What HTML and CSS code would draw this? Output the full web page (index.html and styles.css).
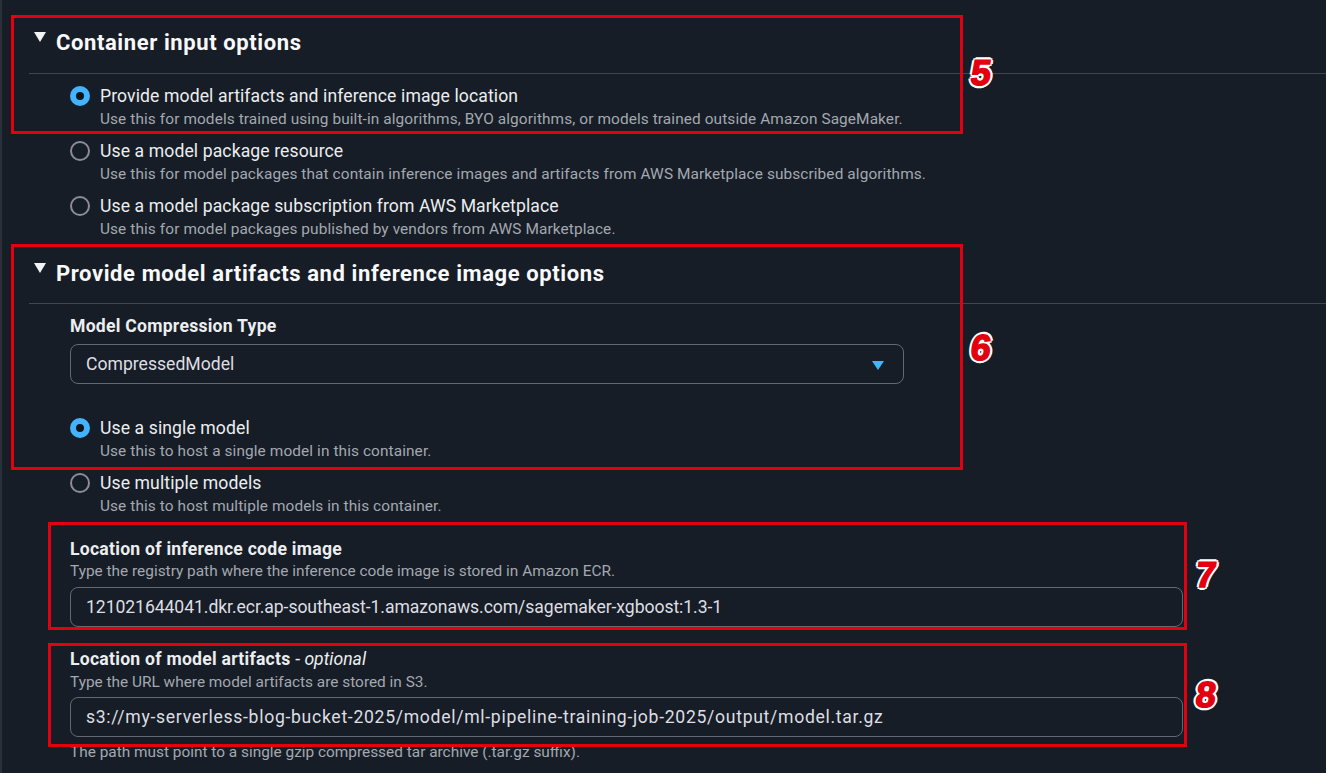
FILE: index.html
```html
<!DOCTYPE html>
<html lang="en">
<head>
<meta charset="utf-8">
<title>Container input options</title>
<link rel="stylesheet" href="styles.css">
</head>
<body>
<div class="page">
  <section class="section">
    <div class="section-header first">
      <span class="caret"></span>
      <h2 class="heading">Container input options</h2>
    </div>
    <div class="section-body first-body">
      <div class="radio-group">
        <div class="radio-option">
          <span class="radio checked"></span>
          <div class="radio-text">
            <div class="radio-label">Provide model artifacts and inference image location</div>
            <div class="radio-desc">Use this for models trained using built-in algorithms, BYO algorithms, or models trained outside Amazon SageMaker.</div>
          </div>
        </div>
        <div class="radio-option">
          <span class="radio"></span>
          <div class="radio-text">
            <div class="radio-label">Use a model package resource</div>
            <div class="radio-desc">Use this for model packages that contain inference images and artifacts from AWS Marketplace subscribed algorithms.</div>
          </div>
        </div>
        <div class="radio-option">
          <span class="radio"></span>
          <div class="radio-text">
            <div class="radio-label">Use a model package subscription from AWS Marketplace</div>
            <div class="radio-desc">Use this for model packages published by vendors from AWS Marketplace.</div>
          </div>
        </div>
      </div>
    </div>
  </section>

  <section class="section">
    <div class="section-header second">
      <span class="caret"></span>
      <h2 class="heading">Provide model artifacts and inference image options</h2>
    </div>
    <div class="section-body">
      <div class="field-label">Model Compression Type</div>
      <div class="select">
        <span class="select-value">CompressedModel</span>
        <span class="select-arrow"></span>
      </div>
      <div class="radio-group model-count">
        <div class="radio-option">
          <span class="radio checked"></span>
          <div class="radio-text">
            <div class="radio-label">Use a single model</div>
            <div class="radio-desc">Use this to host a single model in this container.</div>
          </div>
        </div>
        <div class="radio-option">
          <span class="radio"></span>
          <div class="radio-text">
            <div class="radio-label">Use multiple models</div>
            <div class="radio-desc">Use this to host multiple models in this container.</div>
          </div>
        </div>
      </div>
      <div class="field field-image">
        <div class="field-label">Location of inference code image</div>
        <div class="field-desc">Type the registry path where the inference code image is stored in Amazon ECR.</div>
        <div class="input">121021644041.dkr.ecr.ap-southeast-1.amazonaws.com/sagemaker-xgboost:1.3-1</div>
      </div>
      <div class="field field-artifacts">
        <div class="field-label">Location of model artifacts <span class="optional">- <i>optional</i></span></div>
        <div class="field-desc">Type the URL where model artifacts are stored in S3.</div>
        <div class="input">s3://my-serverless-blog-bucket-2025/model/ml-pipeline-training-job-2025/output/model.tar.gz</div>
        <div class="field-hint">The path must point to a single gzip compressed tar archive (.tar.gz suffix).</div>
      </div>
    </div>
  </section>

  <div class="annot box5"></div>
  <div class="annot box6"></div>
  <div class="annot box7"></div>
  <div class="annot box8"></div>
  <span class="num num5">5</span>
  <span class="num num6">6</span>
  <span class="num num7">7</span>
  <span class="num num8">8</span>
</div>
</body>
</html>
```

FILE: styles.css
```css
* { box-sizing: border-box; }

html, body {
  margin: 0;
  padding: 0;
  background: #161d26;
}

body {
  font-family: Roboto, "Noto Sans", Arial, sans-serif;
  color: #dedee3;
  overflow: hidden;
}

.page {
  position: relative;
  height: 773px;
  padding-left: 27px;
  border-left: 2px solid #2a2f38;
}

.section-header {
  display: flex;
  align-items: flex-start;
  border-bottom: 1px solid #424650;
  padding-left: 5px;
}

.section-header.first {
  padding-top: 31px;
  padding-bottom: 18px;
}

.section-header.second {
  padding-top: 23px;
  padding-bottom: 17px;
}

.caret {
  width: 0;
  height: 0;
  margin-top: 1px;
  margin-right: 10px;
  border-left: 6.5px solid transparent;
  border-right: 6.5px solid transparent;
  border-top: 10px solid #f2f3f3;
}

.heading {
  margin: 0;
  font-size: 22px;
  line-height: 24px;
  font-weight: 700;
  letter-spacing: 0.6px;
  color: #f9f9fb;
}

.section-body {
  padding-left: 41px;
  padding-top: 11px;
}

.radio-group {
  display: flex;
  flex-direction: column;
  gap: 11px;
}

.radio-group.model-count {
  margin-top: 33px;
}

.radio-option {
  display: flex;
  align-items: flex-start;
  gap: 10px;
}

.radio {
  flex: none;
  width: 20px;
  height: 20px;
  margin-top: 1px;
  border-radius: 50%;
  border: 2px solid #8c8c94;
}

.radio.checked {
  border: 6px solid #42b4ff;
  background: #0f141a;
}

.radio-label {
  font-size: 17.6px;
  line-height: 22px;
  letter-spacing: 0.1px;
  color: #eceef0;
}

.radio-desc {
  margin-top: 2px;
  font-size: 15.4px;
  line-height: 20px;
  letter-spacing: 0.1px;
  color: #a4a8b0;
}

.field-label {
  font-size: 17.6px;
  line-height: 22px;
  font-weight: 700;
  letter-spacing: 0.25px;
  color: #eceef0;
}

.optional {
  font-weight: 400;
  letter-spacing: 0;
}

.select {
  margin-top: 7px;
  width: 834px;
  height: 40px;
  border: 1px solid #656871;
  border-radius: 8px;
  display: flex;
  align-items: center;
  justify-content: space-between;
  padding: 0 19px 0 15px;
}

.select-value {
  font-size: 17.6px;
  color: #dedee3;
}

.select-arrow {
  width: 0;
  height: 0;
  border-left: 6px solid transparent;
  border-right: 6px solid transparent;
  border-top: 9px solid #42b4ff;
  margin-top: 2px;
}

.field-image {
  margin-top: 22px;
}

.field-artifacts {
  margin-top: 21px;
}

.field-desc {
  margin-top: 1px;
  font-size: 15.4px;
  line-height: 20px;
  color: #a4a8b0;
}

.field-artifacts .field-desc {
  margin-top: 2px;
}

.input {
  margin-top: 6px;
  width: 1113px;
  height: 40px;
  border: 1px solid #656871;
  border-radius: 8px;
  display: flex;
  align-items: center;
  padding: 0 15px;
  font-size: 17.6px;
  letter-spacing: -0.07px;
  color: #dedee3;
}

.field-artifacts .input {
  margin-top: 5px;
  letter-spacing: 0.7px;
}

.field-hint {
  margin-top: 5px;
  font-size: 15.4px;
  line-height: 20px;
  color: #a4a8b0;
}

/* Annotation overlays */
.annot {
  position: absolute;
  border: 3px solid #e3000f;
  pointer-events: none;
}

.box5 { left: 9px;  top: 15px;  width: 952px;  height: 119px; }
.box6 { left: 9px;  top: 244px; width: 952px;  height: 226px; }
.box7 { left: 46px; top: 522px; width: 1139px; height: 108px; }
.box8 { left: 46px; top: 643px; width: 1139px; height: 104px; }

.num {
  position: absolute;
  font-family: "Liberation Sans", Arial, sans-serif;
  font-weight: 700;
  font-size: 36px;
  line-height: 36px;
  color: #e3000f;
  transform: skewX(-7deg);
  -webkit-text-stroke: 1.5px #e3000f;
  text-shadow:
    2px 0 0 #fff, -2px 0 0 #fff, 0 2px 0 #fff, 0 -2px 0 #fff,
    2px 2px 0 #fff, -2px -2px 0 #fff, 2px -2px 0 #fff, -2px 2px 0 #fff,
    3px 0 0 #fff, -3px 0 0 #fff, 0 3px 0 #fff, 0 -3px 0 #fff;
}

.num5 { left: 969px;  top: 55px; }
.num6 { left: 969px;  top: 330px; }
.num7 { left: 1194px; top: 557px; }
.num8 { left: 1194px; top: 677px; }
```
